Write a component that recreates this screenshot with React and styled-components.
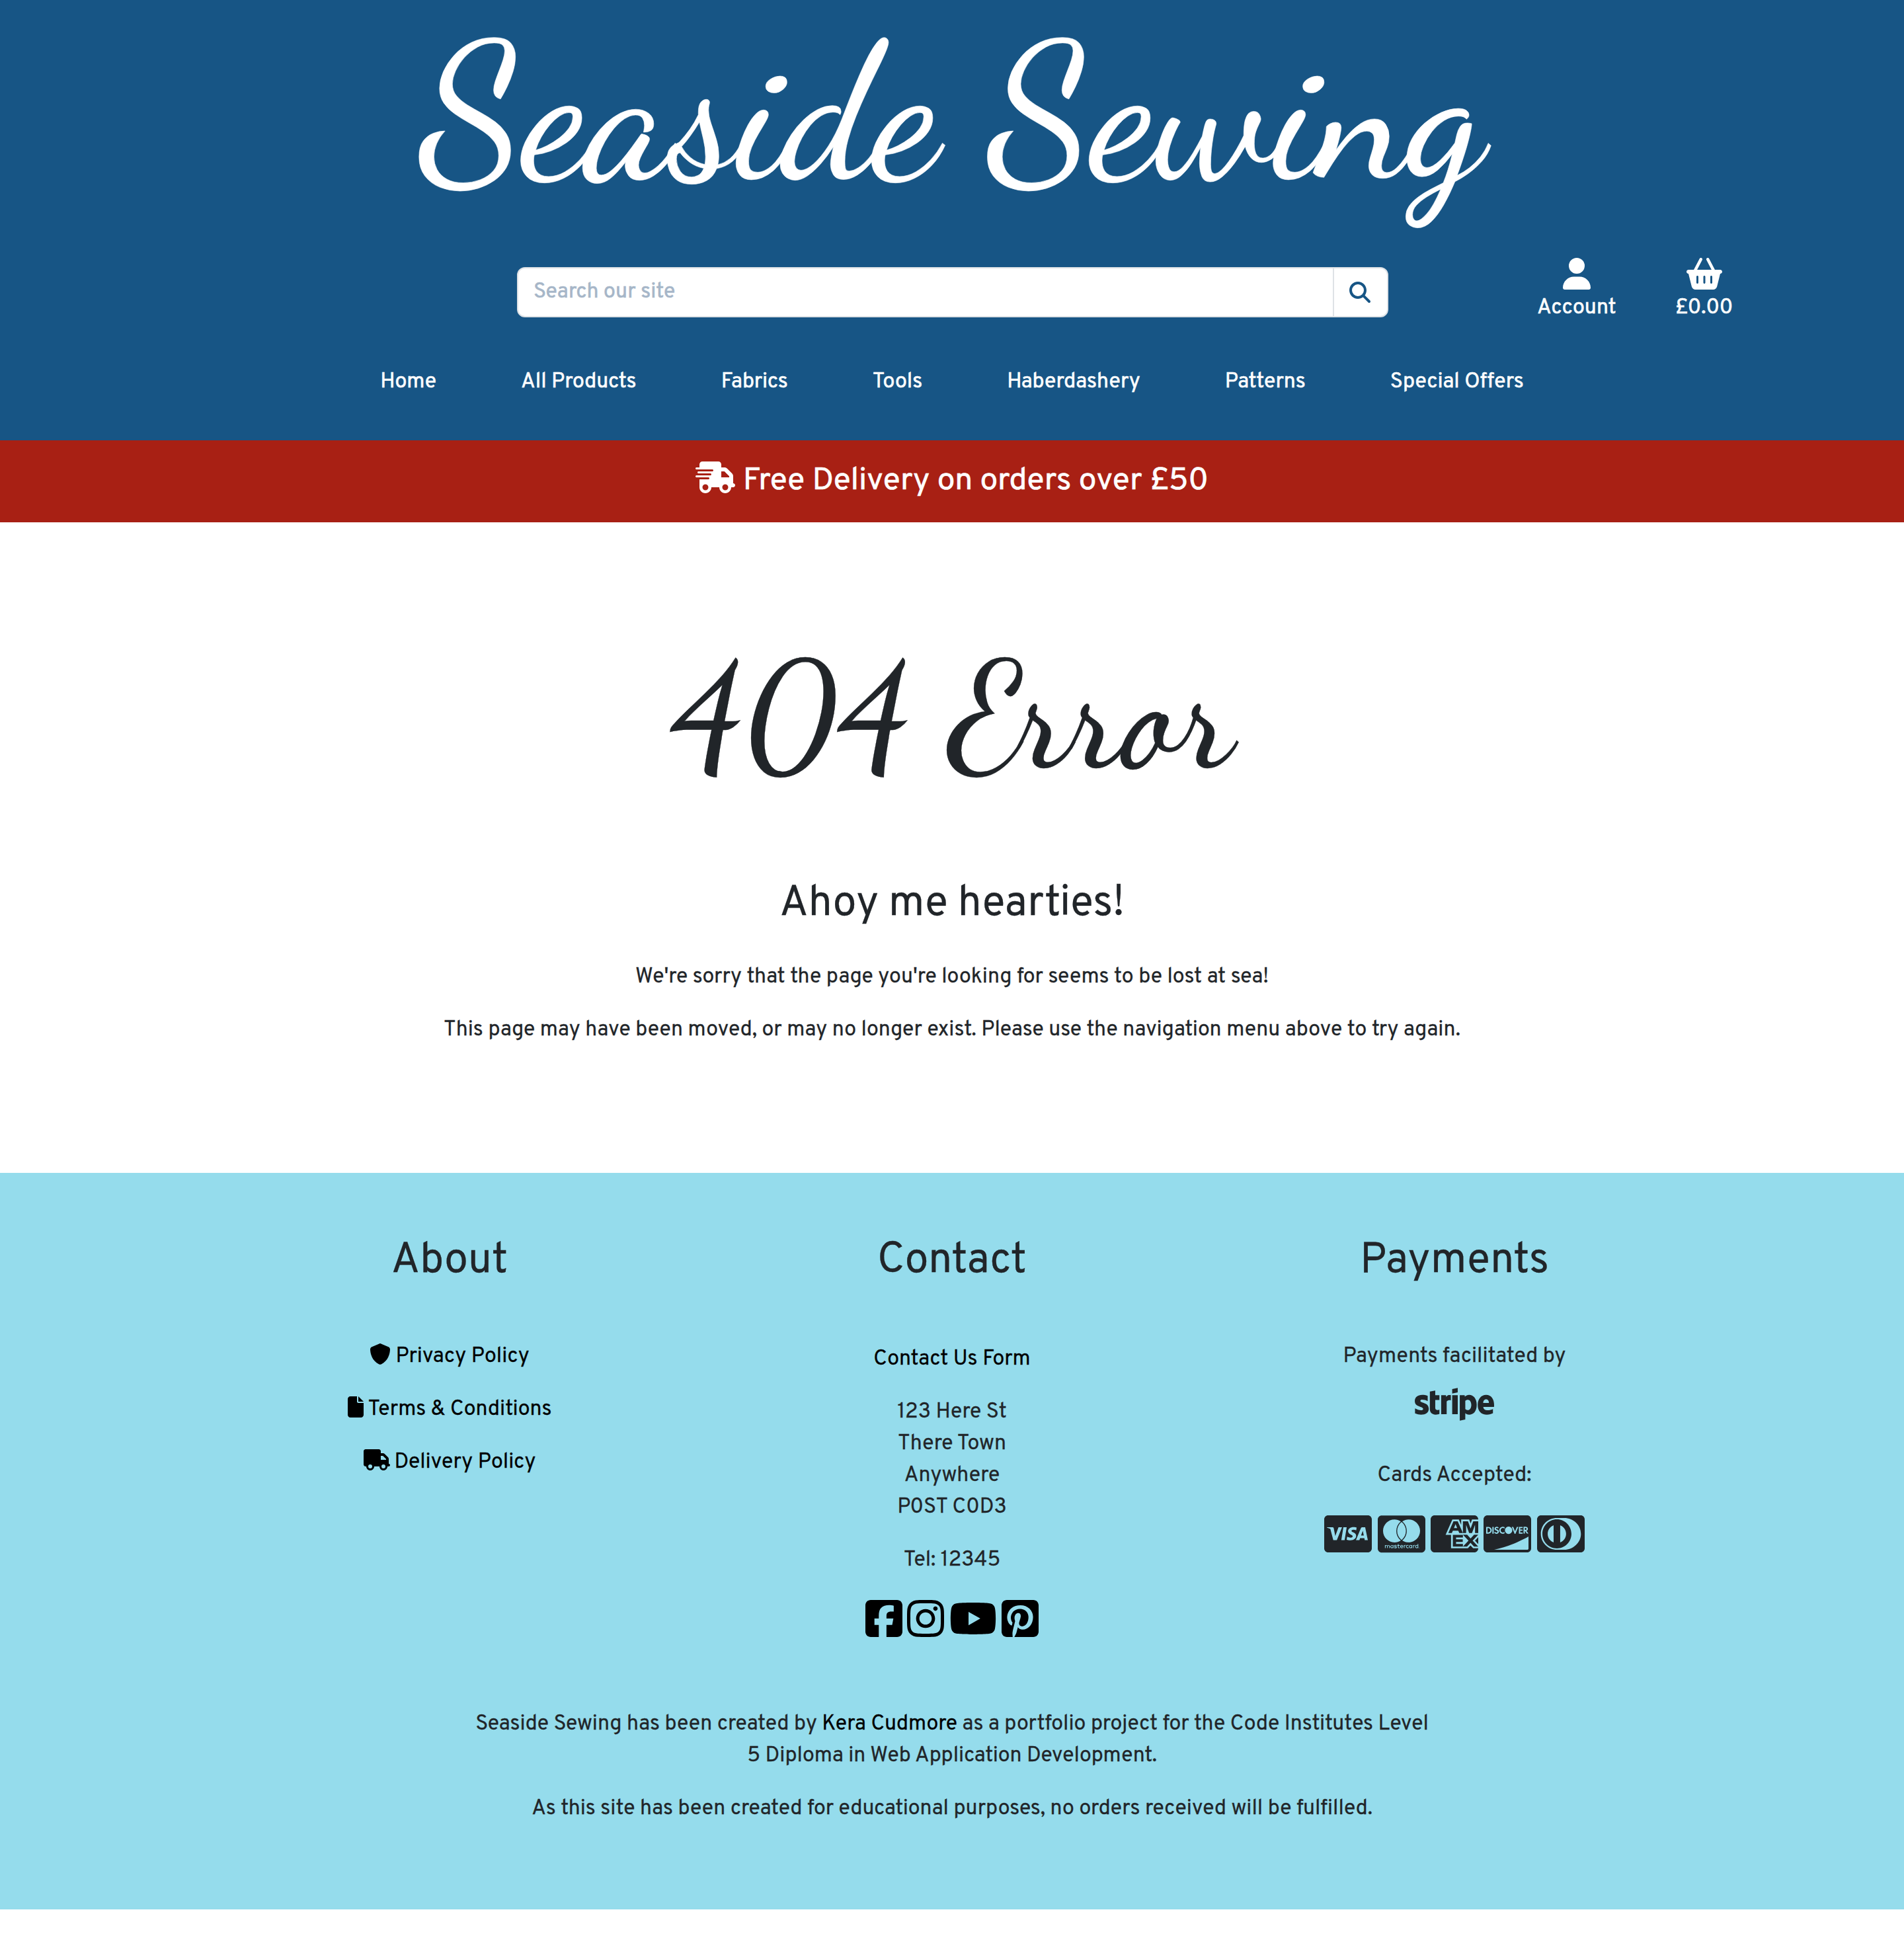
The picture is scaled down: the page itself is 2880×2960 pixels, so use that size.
import React from "react";
import styled, { createGlobalStyle } from "styled-components";
import {
  FaUser,
  FaBasketShopping,
  FaMagnifyingGlass,
  FaTruckFast,
  FaShield,
  FaFile,
  FaTruck,
  FaSquareFacebook,
  FaInstagram,
  FaYoutube,
  FaSquarePinterest,
  FaStripe,
  FaCcVisa,
  FaCcMastercard,
  FaCcAmex,
  FaCcDiscover,
  FaCcDinersClub,
} from "react-icons/fa6";

const navy = "#175585";
const ink = "#212529";

const GlobalStyle = createGlobalStyle`
  *, *::before, *::after { box-sizing: border-box; }
  body {
    margin: 0;
    background: #fff;
    color: ${ink};
    font-family: Overpass, Roboto, sans-serif;
    font-size: 32px;
    line-height: 48px;
    -webkit-text-stroke: 0.3px;
  }
  a { color: inherit; text-decoration: none; }
  svg { display: block; flex: none; }
`;

const Header = styled.header`
  background: ${navy};
  color: #fff;
  height: 666px;
  -webkit-text-stroke: 0.6px;
`;

const ScriptTitle = styled.h1`
  margin: 0;
  font-family: "Dancing Script", "Liberation Serif", serif;
  font-weight: 500;
  font-size: ${(p) => p.$size}px;
  line-height: ${(p) => p.$line}px;
  text-align: center;
  white-space: nowrap;
`;

const Toolbar = styled.div`
  display: flex;
  align-items: flex-start;
  padding: 46px 0 0 782px;
`;

const SearchBox = styled.form`
  display: flex;
  width: 1318px;
  height: 76px;
  margin: 14px 225px 0 0;
  background: #fff;
  border: 2px solid #dee2e6;
  border-radius: 12px;
  overflow: hidden;
`;

const SearchInput = styled.input`
  flex: 1;
  min-width: 0;
  border: 0;
  outline: 0;
  background: transparent;
  padding: 0 23px;
  font: inherit;
  color: ${navy};
  &::placeholder {
    color: #a6b6c8;
    opacity: 1;
  }
`;

const SearchButton = styled.button`
  display: flex;
  align-items: center;
  justify-content: center;
  width: 82px;
  padding: 0 2px 0 0;
  border: 0;
  border-left: 2px solid #dee2e6;
  background: transparent;
  color: ${navy};
  font-size: 32px;
`;

const Action = styled.a`
  display: flex;
  flex-direction: column;
  align-items: center;
  gap: 4px;
  margin-right: 89px;
`;

const Icon = styled.span`
  display: block;
  margin-top: ${(p) => p.$drop || 0}px;
  svg {
    width: ${(p) => p.$w}px;
    height: ${(p) => p.$h}px;
  }
`;

const Nav = styled.nav`
  display: flex;
  justify-content: center;
  gap: 128px;
  padding-top: 64px;
`;

const Banner = styled.div`
  display: flex;
  justify-content: center;
  align-items: flex-start;
  gap: 12px;
  height: 124px;
  padding-top: 32px;
  background: #a82014;
  color: #fff;
  font-size: 48px;
  line-height: 60px;
  -webkit-text-stroke: 0.6px;
`;

const Main = styled.main`
  height: 984px;
  padding-top: 160px;
  text-align: center;
`;

const Heading = styled.h2`
  margin: ${(p) => p.$top || 0}px 0 0;
  font-size: 64px;
  font-weight: 400;
  line-height: 76px;
`;

const Text = styled.p`
  margin: ${(p) => p.$top}px 0 0;
`;

const Footer = styled.footer`
  height: 1114px;
  padding-top: 96px;
  background: #95dcec;
  text-align: center;
`;

const Columns = styled.div`
  display: grid;
  grid-template-columns: repeat(3, 760px);
  justify-content: center;
`;

const Column = styled.section`
  display: flex;
  flex-direction: column;
  align-items: center;
`;

const PolicyLink = styled.a`
  display: flex;
  gap: 7px;
  margin-top: ${(p) => p.$top || 32}px;
  color: #000;
`;

const BlackLink = styled.a`
  color: #000;
`;

const IconRow = styled.div`
  display: flex;
  gap: ${(p) => p.$gap}px;
  margin-top: ${(p) => p.$top}px;
  color: ${(p) => p.$color || "inherit"};
`;

const Credits = styled.div`
  padding-top: 72px;
`;

const NAV = ["Home", "All Products", "Fabrics", "Tools", "Haberdashery", "Patterns", "Special Offers"];
const CARDS = [FaCcVisa, FaCcMastercard, FaCcAmex, FaCcDiscover, FaCcDinersClub];
const SOCIAL = [
  [FaSquareFacebook, 56],
  [FaInstagram, 56],
  [FaYoutube, 72],
  [FaSquarePinterest, 56],
];
const POLICIES = [
  { icon: FaShield, width: 32, label: "Privacy Policy", top: 82 },
  { icon: FaFile, width: 24, label: "Terms & Conditions" },
  { icon: FaTruck, width: 40, label: "Delivery Policy" },
];

export default function App() {
  return (
    <>
      <GlobalStyle />
      <Header>
        <ScriptTitle $size={288} $line={344}>Seaside Sewing</ScriptTitle>
        <Toolbar>
          <SearchBox>
            <SearchInput placeholder="Search our site" />
            <SearchButton type="button" aria-label="Search">
              <FaMagnifyingGlass />
            </SearchButton>
          </SearchBox>
          <Action href="#">
            <Icon $w={42} $h={48}><FaUser /></Icon>
            Account
          </Action>
          <Action href="#">
            <Icon $w={54} $h={48}><FaBasketShopping /></Icon>
            £0.00
          </Action>
        </Toolbar>
        <Nav>
          {NAV.map((label) => (
            <a key={label} href="#">{label}</a>
          ))}
        </Nav>
      </Header>

      <Banner>
        <Icon $w={60} $h={48}><FaTruckFast /></Icon>
        <span>Free Delivery on orders over £50</span>
      </Banner>

      <Main>
        <ScriptTitle $size={224} $line={270}>404 Error</ScriptTitle>
        <Heading $top={110}>Ahoy me hearties!</Heading>
        <Text $top={48}>
          We're sorry that the page you're looking for seems to be lost at sea!
        </Text>
        <Text $top={32}>
          This page may have been moved, or may no longer exist. Please use the navigation menu above to try again.
        </Text>
      </Main>

      <Footer>
        <Columns>
          <Column>
            <Heading>About</Heading>
            {POLICIES.map(({ icon: Glyph, width, label, top }) => (
              <PolicyLink key={label} href="#" $top={top}>
                <Icon $w={width} $h={32} $drop={4}><Glyph /></Icon>
                {label}
              </PolicyLink>
            ))}
          </Column>
          <Column>
            <Heading>Contact</Heading>
            <Text $top={86}>
              <BlackLink href="#">Contact Us Form</BlackLink>
            </Text>
            <Text $top={32}>
              123 Here St<br />There Town<br />Anywhere<br />P0ST C0D3
            </Text>
            <Text $top={32}>Tel: 12345</Text>
            <IconRow $top={32} $gap={7.5} $color="#000">
              {SOCIAL.map(([Glyph, w], i) => (
                <Icon key={i} $w={w} $h={64}><Glyph /></Icon>
              ))}
            </IconRow>
          </Column>
          <Column>
            <Heading>Payments</Heading>
            <Text $top={82}>Payments facilitated by</Text>
            <IconRow $top={0} $gap={0}>
              <Icon $w={120} $h={96}><FaStripe /></Icon>
            </IconRow>
            <Text $top={36}>Cards Accepted:</Text>
            <IconRow $top={32} $gap={8.4}>
              {CARDS.map((Glyph, i) => (
                <Icon key={i} $w={72} $h={64}><Glyph /></Icon>
              ))}
            </IconRow>
          </Column>
        </Columns>
        <Credits>
          <Text $top={32}>
            Seaside Sewing has been created by <BlackLink href="#">Kera Cudmore</BlackLink> as a portfolio project for the Code Institutes Level
            <br />5 Diploma in Web Application Development.
          </Text>
          <Text $top={32}>
            As this site has been created for educational purposes, no orders received will be fulfilled.
          </Text>
        </Credits>
      </Footer>
    </>
  );
}
